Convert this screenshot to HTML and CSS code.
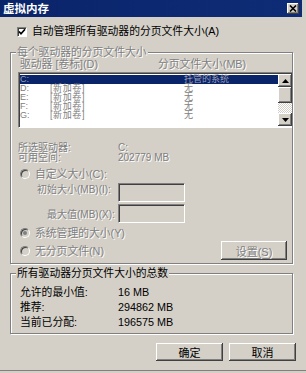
FILE: index.html
```html
<!DOCTYPE html>
<html lang="zh-CN">
<head>
<meta charset="utf-8">
<title>虚拟内存</title>
<link rel="stylesheet" href="styles.css">
</head>
<body>
<div class="win">
  <div class="titlebar">
    <span class="title-text">虚拟内存</span>
    <span class="close"><svg width="8" height="7" viewBox="0 0 8 7"><path d="M1 0.5 L7 6.5 M7 0.5 L1 6.5" stroke="#000" stroke-width="1.6"/></svg></span>
  </div>

  <div class="check-row">
    <span class="checkbox"><svg width="8" height="8" viewBox="0 0 8 8"><path d="M1 3.5 L3 5.8 L7 1.2" fill="none" stroke="#000" stroke-width="1.7"/></svg></span>
    <span>自动管理所有驱动器的分页文件大小(A)</span>
  </div>

  <div class="group g1">
    <div class="legend dis">每个驱动器的分页文件大小</div>
    <div class="hdr dis"><span class="hc1">驱动器 [卷标](D)</span><span>分页文件大小(MB)</span></div>
    <div class="list">
      <div class="rows">
        <div class="row sel"><span class="c1">C:</span><span class="c2"></span><span>托管的系统</span></div>
        <div class="row"><span class="c1">D:</span><span class="c2">[新加卷]</span><span>无</span></div>
        <div class="row"><span class="c1">E:</span><span class="c2">[新加卷]</span><span>无</span></div>
        <div class="row"><span class="c1">F:</span><span class="c2">[新加卷]</span><span>无</span></div>
        <div class="row"><span class="c1">G:</span><span class="c2">[新加卷]</span><span>无</span></div>
      </div>
      <div class="sbar">
        <div class="sbtn"><svg width="7" height="4" viewBox="0 0 7 4"><path d="M3.5 0 L7 4 L0 4 Z" fill="#000"/></svg></div>
        <div class="thumb"></div>
        <div class="track"></div>
        <div class="sbtn"><svg width="7" height="4" viewBox="0 0 7 4"><path d="M0 0 L7 0 L3.5 4 Z" fill="#000"/></svg></div>
      </div>
    </div>

    <div class="info dis">
      <div class="irow"><span class="ilab">所选驱动器:</span><span>C:</span></div>
      <div class="irow"><span class="ilab">可用空间:</span><span>202779 MB</span></div>
    </div>

    <div class="radio-row r1 dis"><span class="radio"></span><span>自定义大小(C):</span></div>
    <div class="field f1 dis"><span class="flab">初始大小(MB)(I):</span><span class="tbox"></span></div>
    <div class="field f2 dis"><span class="flab">最大值(MB)(X):</span><span class="tbox"></span></div>
    <div class="radio-row r2 dis"><span class="radio on"></span><span>系统管理的大小(Y)</span></div>
    <div class="last-row">
      <div class="radio-row r3 dis"><span class="radio"></span><span>无分页文件(N)</span></div>
      <span class="btn set dis">设置(S)</span>
    </div>
  </div>

  <div class="group g2">
    <div class="legend">所有驱动器分页文件大小的总数</div>
    <div class="trow first"><span class="tlab">允许的最小值:</span><span>16 MB</span></div>
    <div class="trow"><span class="tlab">推荐:</span><span>294862 MB</span></div>
    <div class="trow"><span class="tlab">当前已分配:</span><span>196575 MB</span></div>
  </div>

  <div class="buttons">
    <span class="btn">确定</span>
    <span class="btn">取消</span>
  </div>
</div>
</body>
</html>
```

FILE: styles.css
```css
* { box-sizing: border-box; }
html, body { margin: 0; padding: 0; }
body {
  width: 306px;
  height: 373px;
  overflow: hidden;
  background: #d4d0c8;
  font-family: "Liberation Sans", "Noto Sans CJK SC", sans-serif;
  font-size: 10.8px;
  color: #000;
  white-space: nowrap;
}
.win {
  width: 306px;
  height: 371px;
  border-bottom: 1px solid #808080;
}
.titlebar {
  width: 302px;
  height: 17px;
  background: linear-gradient(90deg, #0a246a, #0e2c76);
  display: flex;
  align-items: center;
  justify-content: space-between;
  padding: 0 3px 0 3px;
}
.title-text {
  color: #fff;
  font-weight: bold;
  font-size: 11.5px;
  line-height: 17px;
  font-family: "Noto Sans CJK SC", sans-serif;
}
.close {
  width: 12px;
  height: 11px;
  background: #d4d0c8;
  box-shadow: inset -1px -1px #404040, inset 1px 1px #fff, inset -2px -2px #808080;
  display: flex;
  align-items: center;
  justify-content: center;
}
.check-row {
  margin-top: 8px;
  height: 13px;
  display: flex;
  align-items: center;
  padding-left: 17px;
  gap: 5px;
  line-height: 13px;
}
.checkbox {
  width: 10px;
  height: 10px;
  background: #fff;
  border: 1px solid;
  border-color: #808080 #fff #fff #808080;
  box-shadow: inset 1px 1px #404040;
  display: flex;
  align-items: center;
  justify-content: center;
}
.dis {
  color: #808080;
  text-shadow: 1px 1px 0 #fff;
}
.group {
  margin-left: 10px;
  width: 283px;
  border: 1px solid #808080;
  box-shadow: 1px 1px 0 #fff, inset 1px 1px 0 #fff;
}
.g1 { margin-top: 14px; padding-bottom: 3px; }
.g2 { margin-top: 9px; padding-bottom: 3px; }
.legend {
  display: block;
  width: max-content;
  height: 12px;
  line-height: 12px;
  margin: -7px 0 0 5px;
  padding: 0 1px;
  background: #d4d0c8;
}
.hdr {
  height: 13px;
  line-height: 13px;
  display: flex;
  padding-left: 9px;
}
.hc1 { width: 138px; }
.list {
  margin: 1px 0 0 7px;
  width: 274px;
  height: 56px;
  display: flex;
  background: #fff;
  border: 1px solid;
  border-color: #808080 transparent #fff #808080;
  border-right: 0;
  box-shadow: inset 1px 1px #404040;
}
.rows {
  flex: 1;
  padding: 2px 0 0 1px;
}
.row {
  height: 9px;
  line-height: 9px;
  display: flex;
  font-size: 9px;
  color: #808080;
}
.row.sel {
  background: #0a246a;
  color: #9b9fb4;
}
.c1 { width: 30px; }
.c2 { width: 134px; letter-spacing: 0.6px; }
.sbar {
  width: 14px;
  margin: 1px 0;
  display: flex;
  flex-direction: column;
}
.sbtn, .thumb {
  background: #d4d0c8;
  box-shadow: inset -1px -1px #404040, inset 1px 1px #fff, inset -2px -2px #808080;
}
.sbtn {
  height: 13px;
  display: flex;
  align-items: center;
  justify-content: center;
}
.thumb { height: 16px; }
.track {
  height: 10px;
  background-color: #eae8e3;
  background-image: repeating-conic-gradient(#d4d0c8 0 25%, #fff 0 50%);
  background-size: 2px 2px;
}
.info {
  margin-top: 15px;
  padding-left: 7px;
}
.irow {
  height: 10px;
  line-height: 10px;
  display: flex;
  font-size: 10px;
}
.ilab { width: 100px; }
.radio-row {
  height: 12px;
  display: flex;
  align-items: center;
  gap: 5px;
  padding-left: 9px;
  line-height: 12px;
}
.r1 { margin-top: 5px; }
.r2 { margin-top: 4px; }
.radio {
  width: 10px;
  height: 10px;
  border-radius: 50%;
  background: #d4d0c8;
  border: 1px solid;
  border-color: #808080 #fff #fff #808080;
  box-shadow: inset 1px 1px #404040;
  display: flex;
  align-items: center;
  justify-content: center;
}
.radio.on::after {
  content: "";
  width: 4px;
  height: 4px;
  border-radius: 50%;
  background: #808080;
}
.field {
  height: 19px;
  display: flex;
}
.f1 { margin-top: 3px; }
.f2 { margin-top: 2px; }
.flab {
  flex: 0 0 107px;
  line-height: 13px;
  font-size: 10px;
}
.f1 .flab { padding-left: 26px; }
.f2 .flab { padding-left: 36px; padding-top: 4px; }
.tbox {
  width: 67px;
  height: 19px;
  background: #d4d0c8;
  border: 1px solid;
  border-color: #808080 #fff #fff #808080;
  box-shadow: inset 1px 1px #404040, inset -1px -1px #d4d0c8;
}
.last-row {
  margin-top: 2px;
  height: 19px;
  display: flex;
  align-items: center;
  justify-content: space-between;
  padding-right: 5px;
}
.btn {
  display: flex;
  align-items: center;
  justify-content: center;
  width: 67px;
  height: 18px;
  background: #d4d0c8;
  box-shadow: inset -1px -1px #404040, inset 1px 1px #fff, inset -2px -2px #808080;
  font-size: 11px;
}
.btn.set {
  width: 66px;
  height: 19px;
}
.trow {
  height: 15px;
  line-height: 15px;
  display: flex;
  padding-left: 9px;
}
.trow.first { margin-top: 6px; }
.tlab { width: 98px; }
.buttons {
  margin-top: 9px;
  display: flex;
  justify-content: flex-end;
  gap: 6px;
  padding-right: 10px;
}
```
